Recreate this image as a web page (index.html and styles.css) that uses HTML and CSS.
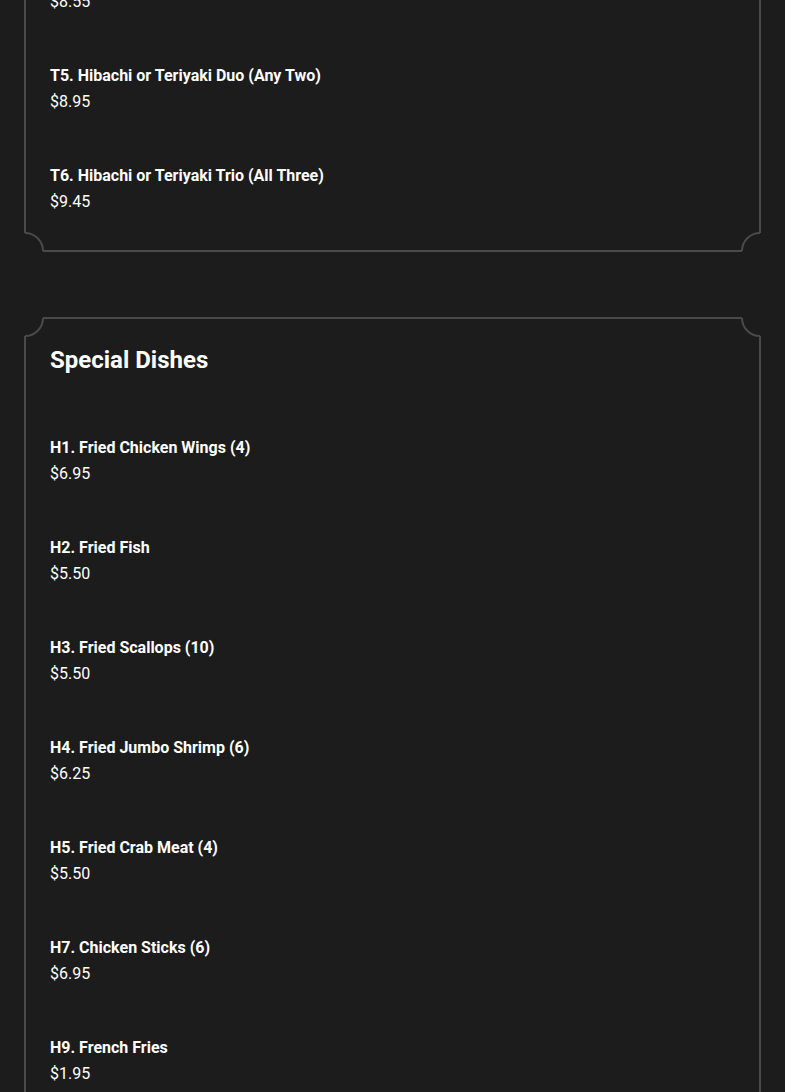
FILE: index.html
```html
<!DOCTYPE html>
<html lang="en">
<head>
<meta charset="utf-8">
<title>Menu</title>
<link rel="stylesheet" href="styles.css">
</head>
<body>
<main class="menu">
  <section class="card card-first">
    <svg class="corner tl" viewBox="0 0 20 20" width="20" height="20"><path class="cover" d="M0 0H19V1A18 18 0 0 1 1 19H0Z"/><path class="arc" d="M19 1A18 18 0 0 1 1 19"/></svg>
    <svg class="corner tr" viewBox="0 0 20 20" width="20" height="20"><path class="cover" d="M0 0H19V1A18 18 0 0 1 1 19H0Z"/><path class="arc" d="M19 1A18 18 0 0 1 1 19"/></svg>
    <svg class="corner bl" viewBox="0 0 20 20" width="20" height="20"><path class="cover" d="M0 0H19V1A18 18 0 0 1 1 19H0Z"/><path class="arc" d="M19 1A18 18 0 0 1 1 19"/></svg>
    <svg class="corner br" viewBox="0 0 20 20" width="20" height="20"><path class="cover" d="M0 0H19V1A18 18 0 0 1 1 19H0Z"/><path class="arc" d="M19 1A18 18 0 0 1 1 19"/></svg>
    <div class="item">
      <div class="item-name">T4. Hibachi or Teriyaki Shrimp</div>
      <div class="item-price">$8.55</div>
    </div>
    <div class="item">
      <div class="item-name">T5. Hibachi or Teriyaki Duo (Any Two)</div>
      <div class="item-price">$8.95</div>
    </div>
    <div class="item">
      <div class="item-name">T6. Hibachi or Teriyaki Trio (All Three)</div>
      <div class="item-price">$9.45</div>
    </div>
  </section>

  <section class="card">
    <svg class="corner tl" viewBox="0 0 20 20" width="20" height="20"><path class="cover" d="M0 0H19V1A18 18 0 0 1 1 19H0Z"/><path class="arc" d="M19 1A18 18 0 0 1 1 19"/></svg>
    <svg class="corner tr" viewBox="0 0 20 20" width="20" height="20"><path class="cover" d="M0 0H19V1A18 18 0 0 1 1 19H0Z"/><path class="arc" d="M19 1A18 18 0 0 1 1 19"/></svg>
    <svg class="corner bl" viewBox="0 0 20 20" width="20" height="20"><path class="cover" d="M0 0H19V1A18 18 0 0 1 1 19H0Z"/><path class="arc" d="M19 1A18 18 0 0 1 1 19"/></svg>
    <svg class="corner br" viewBox="0 0 20 20" width="20" height="20"><path class="cover" d="M0 0H19V1A18 18 0 0 1 1 19H0Z"/><path class="arc" d="M19 1A18 18 0 0 1 1 19"/></svg>
    <h2 class="card-title">Special Dishes</h2>
    <div class="item">
      <div class="item-name">H1. Fried Chicken Wings (4)</div>
      <div class="item-price">$6.95</div>
    </div>
    <div class="item">
      <div class="item-name">H2. Fried Fish</div>
      <div class="item-price">$5.50</div>
    </div>
    <div class="item">
      <div class="item-name">H3. Fried Scallops (10)</div>
      <div class="item-price">$5.50</div>
    </div>
    <div class="item">
      <div class="item-name">H4. Fried Jumbo Shrimp (6)</div>
      <div class="item-price">$6.25</div>
    </div>
    <div class="item">
      <div class="item-name">H5. Fried Crab Meat (4)</div>
      <div class="item-price">$5.50</div>
    </div>
    <div class="item">
      <div class="item-name">H7. Chicken Sticks (6)</div>
      <div class="item-price">$6.95</div>
    </div>
    <div class="item">
      <div class="item-name">H9. French Fries</div>
      <div class="item-price">$1.95</div>
    </div>
  </section>
</main>
</body>
</html>
```

FILE: styles.css
```css
html, body {
  margin: 0;
  padding: 0;
  background: #1c1c1c;
}

body {
  font-family: Roboto, "Liberation Sans", sans-serif;
  color: #ffffff;
  overflow: hidden;
}

.menu {
  padding: 0 24px;
  display: flex;
  flex-direction: column;
  gap: 65px;
}

.card {
  position: relative;
  border: 2px solid #4a4a4a;
  padding: 25px 24px 36px;
  display: flex;
  flex-direction: column;
  gap: 48px;
}

.card-first {
  margin-top: -65px;
  padding-top: 26px;
  padding-bottom: 35px;
}

.corner {
  position: absolute;
  display: block;
}
.corner .cover { fill: #1c1c1c; }
.corner .arc { fill: none; stroke: #4a4a4a; stroke-width: 2; }

.corner.tl { top: -2px; left: -2px; }
.corner.tr { top: -2px; right: -2px; transform: scaleX(-1); }
.corner.bl { bottom: -2px; left: -2px; transform: scaleY(-1); }
.corner.br { bottom: -2px; right: -2px; transform: scale(-1, -1); }

.card-title {
  margin: 0 0 11px;
  font-size: 24px;
  line-height: 32px;
  font-weight: 700;
}

.item-name {
  font-size: 16px;
  line-height: 26px;
  font-weight: 700;
}

.item-price {
  font-size: 16px;
  line-height: 26px;
  font-weight: 400;
}
```
